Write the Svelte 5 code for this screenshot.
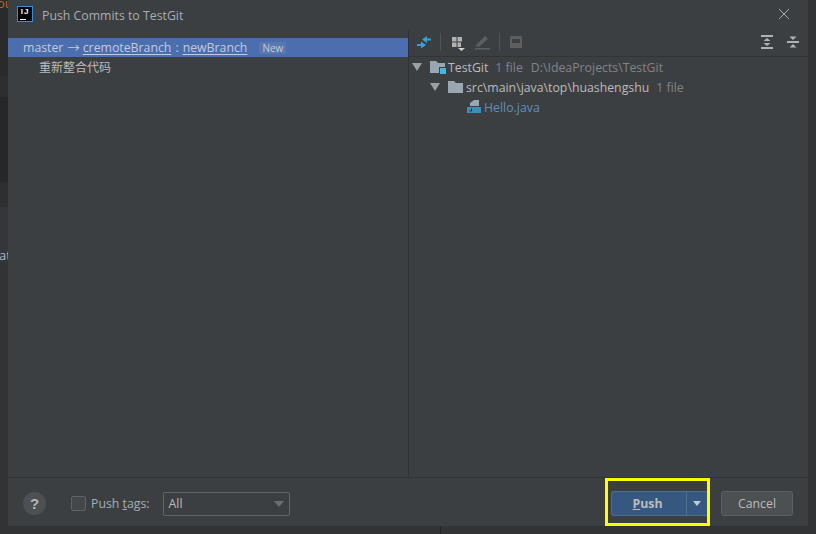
<script>
  const changes = [
    { name: 'TestGit', count: '1 file', path: 'D:\\IdeaProjects\\TestGit', level: 0, kind: 'module' },
    { name: 'src\\main\\java\\top\\huashengshu', count: '1 file', path: '', level: 1, kind: 'folder' },
    { name: 'Hello.java', count: '', path: '', level: 2, kind: 'file' }
  ];
</script>

<div class="page">
  <div class="backdrop">
    <span class="bit orange">ou</span>
    <span class="bit at">at</span>
  </div>
  <i class="editor-line"></i>
  <div class="dialog">
    <div class="title">
      <div class="logo"><span>IJ</span><i></i></div>
      <span class="title-text">Push Commits to TestGit</span>
      <svg class="close" width="12" height="12" viewBox="0 0 12 12">
        <path d="M1 1 L11 11 M11 1 L1 11" stroke="#a9a9a9" stroke-width="1" fill="none" />
      </svg>
    </div>

    <div class="body">
      <div class="commits">
        <div class="branch">
          <span>master</span><span class="arrow">→</span><u>cremoteBranch</u><span class="colon">:</span><u>newBranch</u>
          <span class="tag">New</span>
        </div>
        <div class="commit">重新整合代码</div>
      </div>

      <div class="details">
        <div class="toolbar">
          <svg width="16" height="16" viewBox="0 0 16 16">
            <path d="M6 5.5 L11 2 V4.5 H15 V6.5 H11 V9 Z M10 11 L5 7.5 V10 H1 V12 H5 V14.5 Z" fill="#389fd6" />
          </svg>
          <i class="sep first"></i>
          <svg width="18" height="18" viewBox="0 0 18 18">
            <path d="M4 4 H8.5 V8.5 H4 Z M9.5 4 H14 V8.5 H9.5 Z M4 9.5 H8.5 V14 H4 Z M9.5 9.5 H13 V14 H9.5 Z" fill="#afb1b3" />
            <path d="M10 15 H17 L13.5 18 Z" fill="#d0d2d3" />
          </svg>
          <svg width="18" height="18" viewBox="0 0 18 18">
            <path d="M3 12 L12 3 L15 5.5 L6.5 13.5 H3 Z M2 15 H17 V16.5 H2 Z" fill="#5d5e60" />
          </svg>
          <i class="sep second"></i>
          <svg class="save" width="14" height="14" viewBox="0 0 14 14">
            <path d="M1 1 H13 V13 H1 Z" fill="#5d5e60" />
            <path d="M3 4 H11 V8 H3 Z" fill="#3c3f41" />
          </svg>
          <span class="grow"></span>
          <svg width="14" height="16" viewBox="0 0 14 16">
            <path d="M1 1 H13 V3 H1 Z M1 13 H13 V15 H1 Z M7 4 L10.5 7 H3.5 Z M7 12 L3.5 9 H10.5 Z" fill="#afb1b3" />
          </svg>
          <svg class="last" width="14" height="16" viewBox="0 0 14 16">
            <path d="M1 7 H13 V9 H1 Z M7 6 L3.5 2.5 H10.5 Z M7 10 L10.5 13.5 H3.5 Z" fill="#afb1b3" />
          </svg>
        </div>
        <div class="tree">
          {#each changes as row}
            <div class="node" class:sub={row.level === 1} class:leaf={row.level === 2}>
              {#if row.level < 2}
                <svg class="caret" width="10" height="8" viewBox="0 0 10 8"><path d="M0 0 H10 L5 8 Z" fill="#9da0a2" /></svg>
              {/if}
              {#if row.kind === 'file'}
                <svg class="icon" width="16" height="16" viewBox="0 0 16 16">
                  <path d="M4 7 V4 L8 1 H13 V7 Z" fill="#9aa7b0" />
                  <path d="M1 8 H15 V14 H1 Z" fill="#3d8fb8" />
                  <path d="M5.5 9.5 V12 H3.5" stroke="#2b2b2b" fill="none" />
                </svg>
              {:else}
                <svg class="icon" width="16" height="14" viewBox="0 0 16 14">
                  <path d="M0 1 H6 L8 3 H15 V13 H0 Z" fill="#9aa7b0" />
                  {#if row.kind === 'module'}
                    <path d="M9 7 H15 V14 H9 Z" fill="#3c3f41" />
                    <path d="M10 8 H16 V14 H10 Z" fill="#40b6e0" />
                  {/if}
                </svg>
              {/if}
              <span class="name">{row.name}</span>
              {#if row.count}<span class="muted">{row.count}</span>{/if}
              {#if row.path}<span class="muted">{row.path}</span>{/if}
            </div>
          {/each}
        </div>
      </div>
    </div>

    <div class="footer">
      <button class="help">?</button>
      <label class="tags">
        <span class="check"></span>
        <span>Push <u>t</u>ags:</span>
      </label>
      <div class="select">
        <span>All</span>
        <svg width="10" height="6" viewBox="0 0 10 6"><path d="M0 0 H10 L5 6 Z" fill="#6b6d6f" /></svg>
      </div>
      <span class="grow"></span>
      <div class="highlight">
        <div class="push">
          <span class="push-label"><u>P</u>ush</span>
          <span class="push-drop">
            <svg width="8" height="5" viewBox="0 0 8 5"><path d="M0 0 H8 L4 5 Z" fill="#c4cbd2" /></svg>
          </span>
        </div>
      </div>
      <button class="cancel">Cancel</button>
    </div>
  </div>
</div>

<style>
  :global(body) {
    margin: 0;
  }
  .page {
    position: relative;
    width: 816px;
    height: 534px;
    overflow: hidden;
    background: #313335;
    font-family: "Open Sans", "Noto Sans CJK SC", sans-serif;
    font-size: 12.3px;
    color: #bbbbbb;
  }
  .backdrop {
    position: absolute;
    left: 0;
    top: 0;
    width: 8px;
    height: 534px;
    background: linear-gradient(
      #2a2a2a 0 76px,
      #2e2e2e 76px 97px,
      #262728 97px 182px,
      #2e2f31 182px 207px,
      #34363a 207px 263px,
      #313335 263px
    );
  }
  .bit {
    position: absolute;
    font-size: 13px;
  }
  .orange {
    top: -6px;
    left: -3px;
    color: #b5692a;
  }
  .at {
    top: 246px;
    left: -1px;
    color: #a9b7c6;
  }
  .editor-line {
    position: absolute;
    left: 440px;
    top: 526px;
    width: 1px;
    height: 8px;
    background: #242526;
  }
  .dialog {
    position: absolute;
    left: 8px;
    top: 0;
    width: 800px;
    height: 526px;
    display: flex;
    flex-direction: column;
    background: #3c3f41;
  }
  .title {
    height: 30px;
    flex: none;
    display: flex;
    align-items: center;
    padding-left: 9px;
    color: #a9adaf;
  }
  .logo {
    position: relative;
    width: 14px;
    height: 14px;
    margin-top: -2px;
    background: #000;
    border: 1px solid #2a8fe8;
    margin-right: 9px;
    color: #fff;
    font-family: "Liberation Sans", sans-serif;
    font-size: 8px;
    font-weight: bold;
    letter-spacing: 1px;
    line-height: 10px;
    text-align: center;
  }
  .logo i {
    position: absolute;
    left: 2px;
    bottom: 1px;
    width: 6px;
    height: 1px;
    background: #fff;
  }
  .close {
    margin-left: auto;
    margin-right: 18px;
    margin-top: -2px;
  }
  .body {
    flex: 1;
    display: flex;
    min-height: 0;
  }
  .commits {
    width: 400px;
    flex: none;
    padding-top: 8px;
    border-right: 1px solid #2f3133;
  }
  .branch {
    height: 19px;
    background: #4b6eaf;
    display: flex;
    align-items: center;
    padding-left: 15px;
    color: #c3cbdb;
  }
  .branch u {
    text-underline-offset: 2px;
  }
  .arrow {
    margin: 0 3px 0 4px;
  }
  .colon {
    margin: 0 4px;
  }
  .tag {
    margin-left: 12px;
    padding: 0 3px;
    background: #5b78ae;
    border-radius: 2px;
    font-size: 10px;
    line-height: 12px;
  }
  .commit {
    height: 19px;
    line-height: 21px;
    padding-left: 31px;
    font-size: 12px;
  }
  .details {
    flex: 1;
    display: flex;
    flex-direction: column;
  }
  .toolbar {
    flex: none;
    display: flex;
    align-items: center;
    gap: 7px;
    padding: 0 0 2px 7px;
    box-sizing: border-box;
    height: 27px;
    border-bottom: 1px solid #323436;
  }
  .sep {
    width: 1px;
    height: 18px;
    background: #515355;
  }
  .first {
    margin-left: 1px;
  }
  .second {
    margin-left: 1px;
  }
  .save {
    margin-left: 2px;
  }
  .grow {
    flex: 1;
  }
  .last {
    margin-right: 8px;
    margin-left: 5px;
  }
  .node {
    height: 20px;
    display: flex;
    align-items: center;
    padding-left: 3px;
    color: #bbbbbb;
  }
  .sub {
    padding-left: 21px;
  }
  .leaf {
    padding-left: 57px;
  }
  .caret {
    margin-right: 8px;
  }
  .icon {
    margin-right: 2px;
  }
  .name {
    margin-right: 7px;
  }
  .muted {
    color: #808487;
    margin-right: 8px;
  }
  .leaf .name {
    color: #5f8fb8;
  }
  .footer {
    height: 45px;
    padding: 3px 0 0 15px;
    flex: none;
    display: flex;
    align-items: center;
    border-top: 1px solid #323436;
  }
  .help {
    width: 23px;
    height: 23px;
    border-radius: 50%;
    border: 0;
    padding: 0;
    background: #4d5052;
    color: #b4b6b8;
    font: bold 15px "Liberation Sans", sans-serif;
  }
  .tags {
    display: flex;
    align-items: center;
    margin-left: 25px;
    gap: 5px;
    color: #a3b0b8;
  }
  .check {
    width: 13px;
    height: 13px;
    border: 1px solid #606365;
    border-radius: 2px;
    background: #43474a;
  }
  .select {
    width: 115px;
    height: 22px;
    margin-left: 13px;
    padding: 0 5px;
    border: 1px solid #646464;
    border-radius: 2px;
    display: flex;
    align-items: center;
    justify-content: space-between;
  }
  .highlight {
    width: 105px;
    height: 48px;
    box-sizing: border-box;
    margin-top: -3px;
    border: 3px solid #ffff00;
    display: flex;
    align-items: center;
    padding: 3px 0 0 3px;
  }
  .push {
    width: 96px;
    height: 25px;
    display: flex;
    background: #365880;
    border: 1px solid #4c708c;
    border-right: 0;
    border-radius: 3px 0 0 3px;
    color: #bbbbbb;
    font-weight: bold;
    line-height: 23px;
    box-sizing: border-box;
  }
  .push-label {
    flex: 1;
    padding-right: 3px;
    text-align: center;
  }
  .push-drop {
    width: 20px;
    border-left: 1px solid #4c708c;
    display: flex;
    align-items: center;
    justify-content: center;
  }
  .cancel {
    width: 72px;
    height: 25px;
    margin-left: 11px;
    margin-right: 15px;
    padding: 0;
    background: #4c5052;
    border: 1px solid #5e6060;
    border-radius: 3px;
    color: #bbbbbb;
    font: 12.3px "Open Sans", sans-serif;
  }
</style>
